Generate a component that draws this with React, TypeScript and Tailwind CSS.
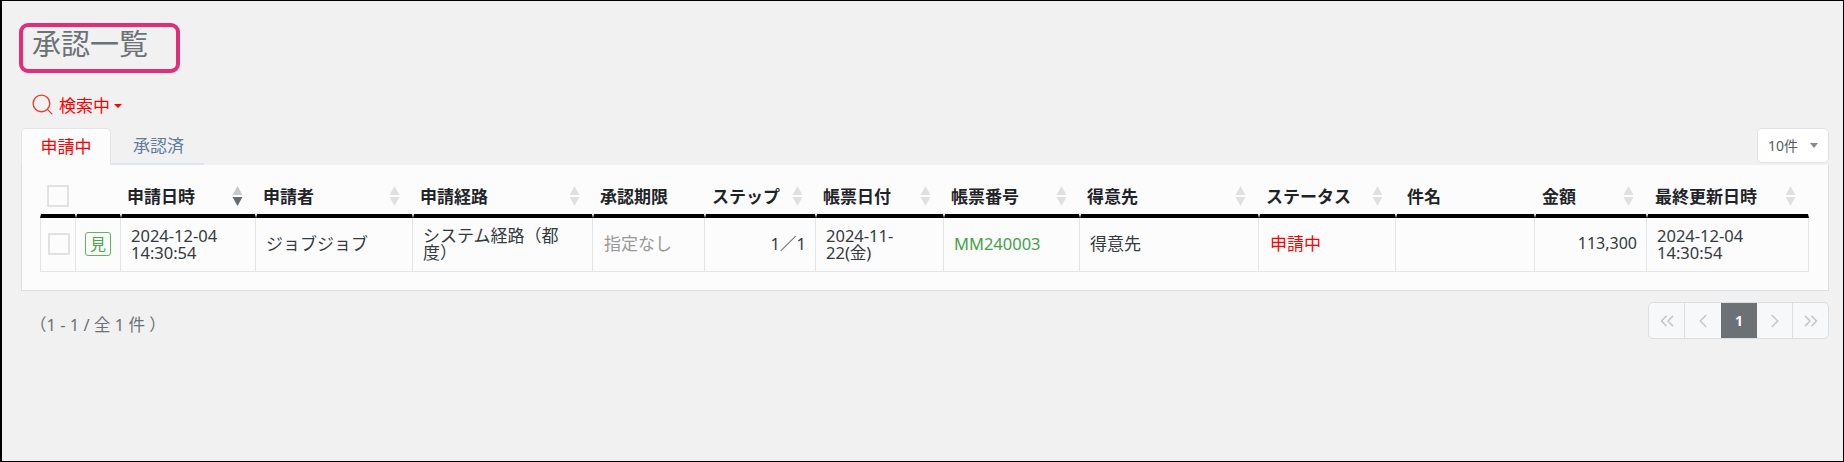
import { Search, ChevronLeft, ChevronRight, ChevronsLeft, ChevronsRight } from "lucide-react";

const columns = [
  { label: "", width: 36, sort: false, pad: "pl-[6px]" },
  { label: "", width: 45, sort: false, pad: "pl-[6px]" },
  { label: "申請日時", width: 135, sort: true, active: true, pad: "pl-[5px]" },
  { label: "申請者", width: 157, sort: true, pad: "pl-[6px]" },
  { label: "申請経路", width: 180, sort: true, pad: "pl-[6px]" },
  { label: "承認期限", width: 112, sort: false, pad: "pl-[6px]" },
  { label: "ステップ", width: 111, sort: true, pad: "pl-[6px]" },
  { label: "帳票日付", width: 128, sort: true, pad: "pl-[6px]" },
  { label: "帳票番号", width: 136, sort: true, pad: "pl-[6px]" },
  { label: "得意先", width: 179, sort: true, pad: "pl-[6px]" },
  { label: "ステータス", width: 137, sort: true, pad: "pl-[6px]" },
  { label: "件名", width: 139, sort: false, pad: "pl-[10px]" },
  { label: "金額", width: 112, sort: true, pad: "pl-[6px]" },
  { label: "最終更新日時", width: 162, sort: true, pad: "pl-[7px]" },
];

function SortIcon({ active = false }: { active?: boolean }) {
  return (
    <svg width="11" height="20" viewBox="0 0 11 20" className="shrink-0">
      <path d="M5.5 0 L10.5 9 L0.5 9 Z" fill={active ? "#c8c8c8" : "#e0e0e0"} />
      <path d="M5.5 20 L10.5 11 L0.5 11 Z" fill={active ? "#666b70" : "#e0e0e0"} />
    </svg>
  );
}

function Checkbox() {
  return <div className="w-[22px] h-[22px] border-2 border-[#e2e2e2] bg-[#fcfcfc]" />;
}

const tdBase = "border-r border-b border-[#e3e6e9] align-middle h-[54px] pb-[2px] leading-[17px] text-[16.5px]";
const dark = "text-[#333a40]";

export default function App() {
  return (
    <div className="w-[1844px] h-[462px] bg-[#f1f1f1] border-t border-r border-b border-l-2 border-black pt-[22px] pl-[17px] pr-[14px] font-['Noto_Sans','Noto_Sans_CJK_JP',sans-serif] overflow-hidden">
      <div className="w-[161px] h-[50px] border-4 border-[#e22d78] rounded-[9px] pl-[9px] pb-[9px] flex items-center">
        <h1 className="text-[29px] leading-none font-normal text-[#6c7176]">承認一覧</h1>
      </div>

      <div className="h-[18px] mt-[23px] pl-[11px] flex items-center text-[#ff0000]">
        <Search size={25} strokeWidth={1.3} className="text-[#f5392b] -translate-y-px" />
        <span className="ml-[4px] text-[17px] leading-none">検索中</span>
        <span className="ml-[4px] mt-[2px] w-0 h-0 border-x-[4px] border-x-transparent border-t-[4px] border-t-[#ff0000]" />
      </div>

      <div className="mt-[14px] ml-[2px] h-[37px] flex items-end justify-between">
        <div className="flex h-[37px] w-[183px] border-b-2 border-[#dfe5ea]">
          <div className="w-[90px] h-[37px] bg-[#fcfcfc] border border-b-0 border-[#e1e5e9] rounded-t-[5px] flex items-center justify-center text-[17px] text-[#ff0000]">
            申請中
          </div>
          <div className="ml-[22px] h-[35px] flex items-center text-[17px] text-[#5e7d99]">承認済</div>
        </div>
        <div className="w-[72px] h-[35px] mb-[2px] bg-white border border-[#dfe3e7] rounded-[5px] flex items-center pl-[10px] text-[14px] text-[#555b61]">
          10件
          <span className="ml-[12px] w-0 h-0 border-x-[4px] border-x-transparent border-t-[5px] border-t-[#888888]" />
        </div>
      </div>

      <div className="ml-[2px] h-[126px] bg-[#fcfcfc] border-r border-b border-l border-[#dcdfe2] pt-[20px] pl-[18px]">
        <table className="table-fixed border-separate border-spacing-0 w-[1769px]">
          <colgroup>
            {columns.map((c, i) => (
              <col key={i} style={{ width: c.width }} />
            ))}
          </colgroup>
          <thead>
            <tr>
              {columns.map((c, i) => (
                <th
                  key={i}
                  className={`h-[28px] pb-[7px] border-b-4 border-b-black border-x border-x-[#fcfcfc] text-left align-middle font-bold text-[17px] leading-none text-[#1f2429] pr-[12px] ${c.pad}`}
                >
                  {i === 0 ? (
                    <Checkbox />
                  ) : (
                    <div className="flex items-center justify-between whitespace-nowrap">
                      <span>{c.label}</span>
                      {c.sort && <SortIcon active={c.active} />}
                    </div>
                  )}
                </th>
              ))}
            </tr>
          </thead>
          <tbody>
            <tr>
              <td className={`${tdBase} border-l pl-[7px]`}>
                <Checkbox />
              </td>
              <td className={`${tdBase} pl-[9px]`}>
                <div className="w-[26px] h-[24px] border border-[#5cb85c] rounded-[3px] flex items-center justify-center text-[16px] text-[#4aa84a] leading-none">
                  見
                </div>
              </td>
              <td className={`${tdBase} ${dark} pl-[10px] pr-[5px]`}>
                2024-12-04
                <br />
                14:30:54
              </td>
              <td className={`${tdBase} ${dark} px-[10px] text-[17px]`}>ジョブジョブ</td>
              <td className={`${tdBase} ${dark} px-[10px] text-[17px]`}>
                システム経路（都
                <br />
                度）
              </td>
              <td className={`${tdBase} pl-[11px] pr-[9px] text-[#999999] text-[17px]`}>指定なし</td>
              <td className={`${tdBase} ${dark} px-[9px] text-right`}>1／1</td>
              <td className={`${tdBase} ${dark} pl-[10px] pr-[5px]`}>
                2024-11-
                <br />
                22(金)
              </td>
              <td className={`${tdBase} px-[10px] text-[#46a04a]`}>MM240003</td>
              <td className={`${tdBase} ${dark} px-[10px] text-[17px]`}>得意先</td>
              <td className={`${tdBase} pl-[11px] pr-[5px] text-[#ff0000] text-[17px]`}>申請中</td>
              <td className={tdBase}></td>
              <td className={`${tdBase} ${dark} px-[9px] text-right text-[16px]`}>113,300</td>
              <td className={`${tdBase} ${dark} pl-[10px] pr-[5px]`}>
                2024-12-04
                <br />
                14:30:54
              </td>
            </tr>
          </tbody>
        </table>
      </div>

      <div className="mt-[11px] ml-[2px] flex items-start justify-between">
        <div className="mt-[15px] pl-[9px] text-[16.5px] leading-none text-[#6c7176] whitespace-pre">（1 - 1 / 全 1 件 ）</div>
        <div className="flex h-[37px] border border-[#dcdfe2] rounded-[5px] overflow-hidden bg-[#f6f8f9]">
          <div className="w-[36px] flex items-center justify-center border-r border-[#dcdfe2] text-[#c8c8c8]">
            <ChevronsLeft size={22} strokeWidth={1.8} />
          </div>
          <div className="w-[36px] flex items-center justify-center text-[#c8c8c8]">
            <ChevronLeft size={22} strokeWidth={1.8} />
          </div>
          <div className="w-[36px] flex items-center justify-center bg-[#6c7176] text-white text-[14px] font-bold">1</div>
          <div className="w-[36px] flex items-center justify-center border-r border-[#dcdfe2] text-[#c8c8c8]">
            <ChevronRight size={22} strokeWidth={1.8} />
          </div>
          <div className="w-[35px] flex items-center justify-center text-[#c8c8c8]">
            <ChevronsRight size={22} strokeWidth={1.8} />
          </div>
        </div>
      </div>
    </div>
  );
}
